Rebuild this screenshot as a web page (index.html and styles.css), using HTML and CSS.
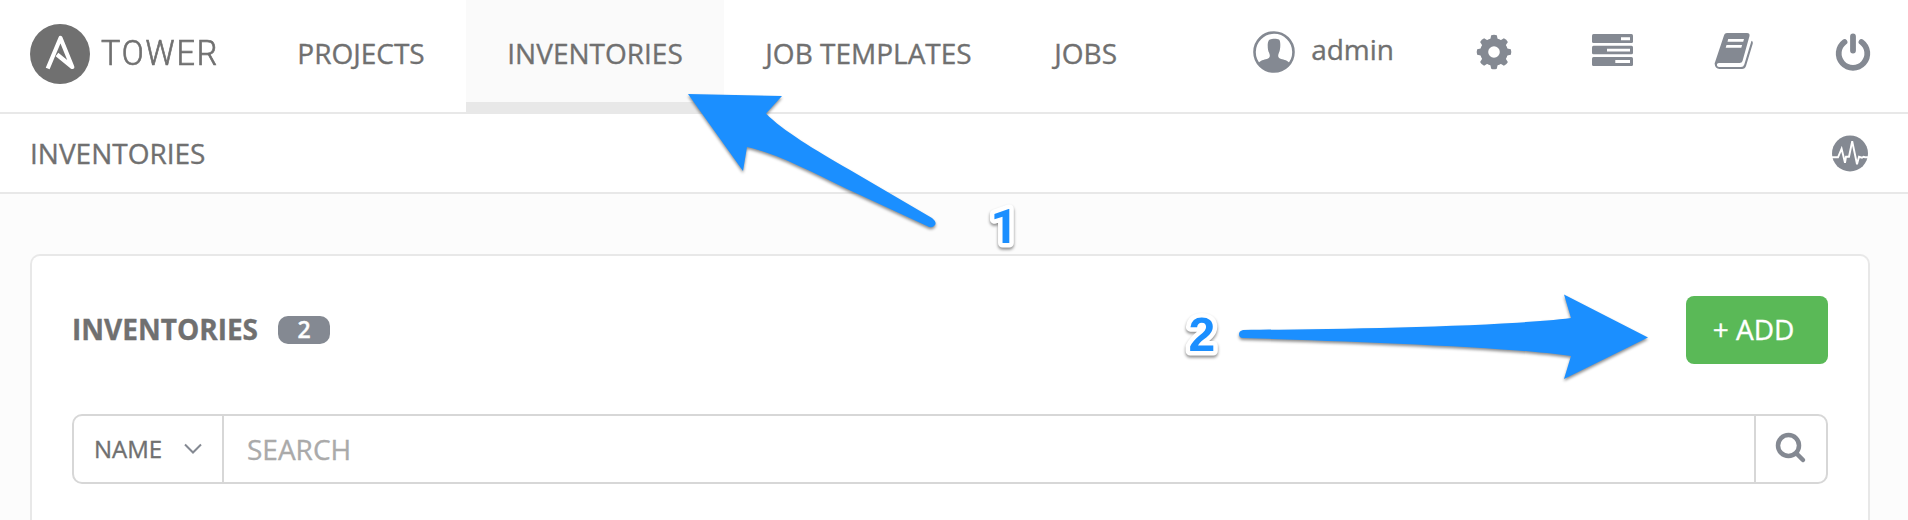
FILE: index.html
```html
<!DOCTYPE html>
<html lang="en">
<head>
<meta charset="utf-8">
<title>Tower - Inventories</title>
<link rel="stylesheet" href="styles.css">
</head>
<body>
<header class="topbar">
  <a class="brand">
    <svg class="brand-mark" width="60" height="60" viewBox="0 0 60 60"><circle cx="30" cy="30" r="30" fill="#707070"/><path d="M17.7 44.500 30.5 14 42.300 43 27 30.500" fill="none" stroke="#fff" stroke-width="4.200" stroke-linejoin="round"/></svg>
    <span class="brand-name">TOWER</span>
  </a>
  <nav class="nav">
    <a class="nav-item">PROJECTS</a>
    <a class="nav-item active">INVENTORIES</a>
    <a class="nav-item">JOB TEMPLATES</a>
    <a class="nav-item">JOBS</a>
  </nav>
  <div class="tools">
    <a class="user">
      <svg width="42" height="42" viewBox="0 0 42 42"><circle cx="21" cy="21" r="19.500" fill="none" stroke="#848992" stroke-width="2.600"/><path d="M5 32.500C9 28 12 29 15 27.500 17.500 26 17 24 16 21.500 14.300 19 14 9 17 8.500 19 7.500 24 7.500 26 8.500 28 10 27.500 19 26 21.500 25 24 24.500 26 27 27.500 30 29 33 28 37 32.500A20 20 0 0 1 5 32.500Z" fill="#848992"/></svg>
      <span class="user-name">admin</span>
    </a>
    <svg class="gear" width="36" height="36" viewBox="0 0 36 36"><g fill="#848992"><circle cx="18" cy="18" r="9.800" fill="none" stroke="#848992" stroke-width="8"/><path id="t" d="M14.200 6 15.200 1.200Q18 .2 20.800 1.200L21.800 6Z"/><use href="#t" transform="rotate(45 18 18)"/><use href="#t" transform="rotate(90 18 18)"/><use href="#t" transform="rotate(135 18 18)"/><use href="#t" transform="rotate(180 18 18)"/><use href="#t" transform="rotate(225 18 18)"/><use href="#t" transform="rotate(270 18 18)"/><use href="#t" transform="rotate(315 18 18)"/></g></svg>
    <svg class="servers" width="41" height="32" viewBox="0 0 41 32"><g fill="#848992"><rect width="41" height="9" rx="1.500"/><rect y="11.700" width="41" height="8.600" rx="1.500"/><rect y="23" width="41" height="9" rx="1.500"/></g><path d="M29 3.300h9v2.900h-9zM15 14.700h23v2.800H15zM23.300 26h14.700v2.900H23.300z" fill="#fff"/></svg>
    <svg class="book" width="40" height="38" viewBox="0 0 40 38"><path d="M13 1H33Q36 1 35.500 4L28.500 29Q28 31 25.500 31H5Q2.500 31 3 33.500 3.500 35 5.500 35H27Q29.500 35 30.300 32.500L37.500 8.800Q39.300 9.500 38.800 11.500L32 34Q31 37 28 37H5.500Q1 36.500 .6 31.500L9.800 4Q10.500 1 13 1Z" fill="#848992"/><path d="M14.200 7h15.800l-.8 2.800H13.500zM12.500 13h15.600l-.8 2.800H11.700z" fill="#fff"/></svg>
    <svg class="power" width="36" height="38" viewBox="0 0 36 38"><path d="M9.500 9A14.300 14.300 0 1 0 26.500 9M18 3.500V17.500" fill="none" stroke="#848992" stroke-width="5.800" stroke-linecap="round"/></svg>
  </div>
</header>
<div class="crumbs">
  <span>INVENTORIES</span>
  <svg width="36" height="37" viewBox="0 0 36 36.500"><circle cx="18" cy="18.200" r="18" fill="#848992"/><path d="M0 22H6L9.600 13.500 13 27.500 14 21.500H17L20.200 6 25 29 27 21.500 30 22.500 31.500 21.500 33 22H36" fill="none" stroke="#fff" stroke-width="1.900"/></svg>
</div>
<main class="page">
  <section class="panel">
    <div class="panel-head">
      <h1 class="panel-title">INVENTORIES</h1>
      <span class="badge">2</span>
      <button class="add">+ ADD</button>
    </div>
    <div class="search">
      <div class="search-key"><span>NAME</span><svg width="18" height="12" viewBox="0 0 18 12"><path d="M1 1.500 9 9.500 17 1.500" fill="none" stroke="#848992" stroke-width="2"/></svg></div>
      <input class="search-input" placeholder="SEARCH">
      <div class="search-go"><svg width="32" height="32" viewBox="0 0 32 32"><circle cx="13.500" cy="13.500" r="10.500" fill="none" stroke="#848992" stroke-width="4.500"/><path d="M21.500 21.500 28 28" stroke="#848992" stroke-width="4.500" stroke-linecap="round"/></svg></div>
    </div>
  </section>
</main>
<svg class="callouts" width="1908" height="520" viewBox="0 0 1908 520">
  <g class="arrows">
    <path d="M688 94 782 96 766 113.500C782 130 815 150 850 170L932 218Q937 222 935 225 932 229 927 226L847 189C810 171 775 153 747 147L743 171Z"/>
    <path d="M1648 337.500 1564 294.500 1571 318C1500 327 1330 329 1243 330Q1239 331 1239 334 1239 338 1243 338C1330 341 1500 346 1571 356L1564 379Z"/>
  </g>
  <g class="numbers"><text class="one" x="1018" y="243" text-anchor="end">1</text><text x="1188.500" y="351">2</text></g>
</svg>
</body>
</html>
```
FILE: styles.css
```css
* { box-sizing: border-box; }
body {
  margin: 0;
  height: 520px;
  overflow: hidden;
  background: #fcfcfc;
  color: #707070;
  font: 28px/38px "Open Sans", sans-serif;
  -webkit-text-stroke: .35px;
}
.topbar {
  height: 114px;
  display: flex;
  background: #fff;
  border-bottom: 2px solid #e8e8e8;
}
.brand { display: flex; width: 256px; padding: 24px 0 0 30px; }
.brand-name {
  margin: 10px 0 0 11px;
  font: 300 35px/40px Roboto, sans-serif;
  letter-spacing: 2px;
  transform: scaleX(.925);
  transform-origin: left;
  -webkit-text-stroke: .7px;
}
.nav { display: flex; height: 114px; }
.nav-item { padding: 34px 41.3px 0; white-space: nowrap; }
.nav-item.active { background: #fafafa; border-bottom: 12px solid #e8e8e8; }
.tools { display: flex; align-items: flex-start; margin-left: auto; padding-right: 37px; }
.user { display: flex; padding-top: 31px; }
.user-name { margin: -1px 2px 0 16px; }
.gear { margin: 34px 0 0 80px; }
.servers { margin: 34px 0 0 80px; }
.book { margin: 32px 0 0 81px; }
.power { margin: 33px 0 0 81px; }
.crumbs {
  height: 80px;
  display: flex;
  align-items: center;
  justify-content: space-between;
  padding: 0 40px 0 30px;
  background: #fff;
  border-bottom: 2px solid #e8e8e8;
}
.page { padding: 60px 38px 0 30px; }
.panel {
  height: 266px;
  padding: 40px 40px 0;
  background: #fff;
  border: 2px solid #e8e8e8;
  border-bottom: 0;
  border-radius: 10px 10px 0 0;
}
.panel-head { display: flex; align-items: center; height: 68px; }
.panel-title { margin: 0 0 2px; font-size: 28px; line-height: 38px; font-weight: 700; }
.badge {
  width: 52px;
  height: 28px;
  margin-left: 20px;
  border-radius: 10px;
  background: #848992;
  color: #fff;
  font-size: 23px;
  font-weight: 600;
  line-height: 27px;
  text-align: center;
}
.add {
  width: 142px;
  height: 68px;
  margin-left: auto;
  padding: 0 7px 2px 0;
  border: 0;
  border-radius: 8px;
  background: #5ab957;
  color: #fff;
  font: inherit;
}
.search {
  display: flex;
  height: 70px;
  margin-top: 50px;
  border: 2px solid #d7d7d7;
  border-radius: 10px;
}
.search-key {
  display: flex;
  align-items: center;
  justify-content: space-between;
  width: 150px;
  padding: 0 20px;
  border-right: 2px solid #d7d7d7;
  font-size: 24px;
}
.search-input {
  flex: 1;
  min-width: 0;
  padding: 0 23px;
  border: 0;
  background: none;
  font: inherit;
}
.search-input::placeholder { color: #aaa; opacity: 1; }
.search-go { width: 72px; padding: 16px 0 0 19px; border-left: 2px solid #d7d7d7; }
.callouts { position: absolute; left: 0; top: 0; pointer-events: none; }
.arrows { fill: #1b8fff; filter: drop-shadow(0 2px 1.5px rgba(0, 0, 0, .45)); }
.numbers {
  font: 700 48px "Liberation Sans", sans-serif;
  fill: #1b8fff;
  stroke: #fff;
  stroke-width: 9px;
  stroke-linejoin: round;
  paint-order: stroke;
  filter: drop-shadow(0 2px 1.5px rgba(0, 0, 0, .45));
}
.one { font-family: Roboto, sans-serif; }
```
